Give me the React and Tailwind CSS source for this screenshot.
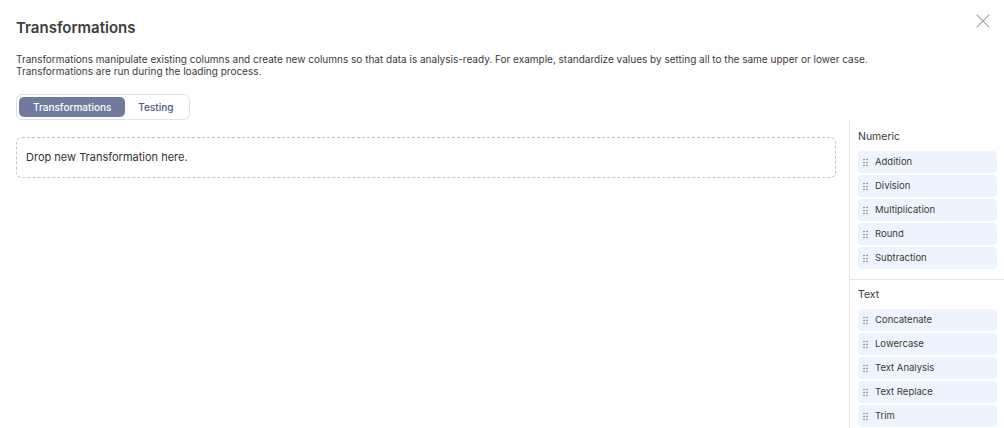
import { X } from 'lucide-react';

const groups = [
  { name: 'Numeric', items: ['Addition', 'Division', 'Multiplication', 'Round', 'Subtraction'] },
  { name: 'Text', items: ['Concatenate', 'Lowercase', 'Text Analysis', 'Text Replace', 'Trim'] },
];

const DragHandle = () => (
  <svg width="5" height="9" viewBox="0 0 5 9" className="shrink-0 text-[#5f6b8a]" fill="currentColor">
    <circle cx="1" cy="1.5" r="0.75" />
    <circle cx="4" cy="1.5" r="0.75" />
    <circle cx="1" cy="4.5" r="0.75" />
    <circle cx="4" cy="4.5" r="0.75" />
    <circle cx="1" cy="7.5" r="0.75" />
    <circle cx="4" cy="7.5" r="0.75" />
  </svg>
);

export default function App() {
  return (
    <div className="relative flex h-[428px] w-full flex-col overflow-hidden bg-white font-['Inter',sans-serif] text-[#333]">
      <button className="absolute right-[9px] top-[9px] text-[#a8a8a8]">
        <X className="h-[24px] w-[24px]" strokeWidth={1.1} />
      </button>

      <div className="px-4 pt-[18px]">
        <h1 className="text-[15px] font-semibold leading-[20px] text-[#3d3d3d]">Transformations</h1>
        <p className="mt-[15px] text-[10px] leading-[12px] text-[#3a3a3a]">
          Transformations manipulate existing columns and create new columns so that data is analysis-ready. For example, standardize values by setting all to the same upper or lower case.
          <br />
          Transformations are run during the loading process.
        </p>
        <div className="mt-[17px] inline-flex rounded-[6px] border border-[#dde3ee] p-[2px]">
          <button className="h-[20px] rounded-[5px] bg-[#6e7b9e] px-[14px] text-[10px] font-medium text-white">
            Transformations
          </button>
          <button className="h-[20px] px-[13px] text-[10px] font-medium text-[#4b5a84]">Testing</button>
        </div>
      </div>

      <div className="flex min-h-0 flex-1">
        <div className="flex-1 pl-4 pr-[13px] pt-[17px]">
          <div className="flex h-[41px] items-center rounded-[6px] border border-dashed border-[#c4c4c4] px-[9px] text-[11px] text-[#333]">
            Drop new Transformation here.
          </div>
        </div>

        <div className="w-[155px] border-l border-[#e6e6e6]">
          {groups.map((g, i) => (
            <div
              key={g.name}
              className={`pl-2 pr-[7px] ${i > 0 ? 'border-t border-[#e6e6e6] pt-[8px] pb-[12px]' : 'pt-[10px] pb-[10px]'}`}
            >
              <div className="mb-[8px] text-[10.5px] leading-[13px] text-[#3a3a3a]">{g.name}</div>
              <div className="flex flex-col gap-[2px]">
                {g.items.map(item => (
                  <div
                    key={item}
                    className="flex h-[22px] items-center gap-[7px] rounded-[4px] bg-[#eef4fd] pl-[5px] text-[9.5px] text-[#3a3a3a]"
                  >
                    <DragHandle />
                    {item}
                  </div>
                ))}
              </div>
            </div>
          ))}
        </div>
      </div>
    </div>
  );
}
